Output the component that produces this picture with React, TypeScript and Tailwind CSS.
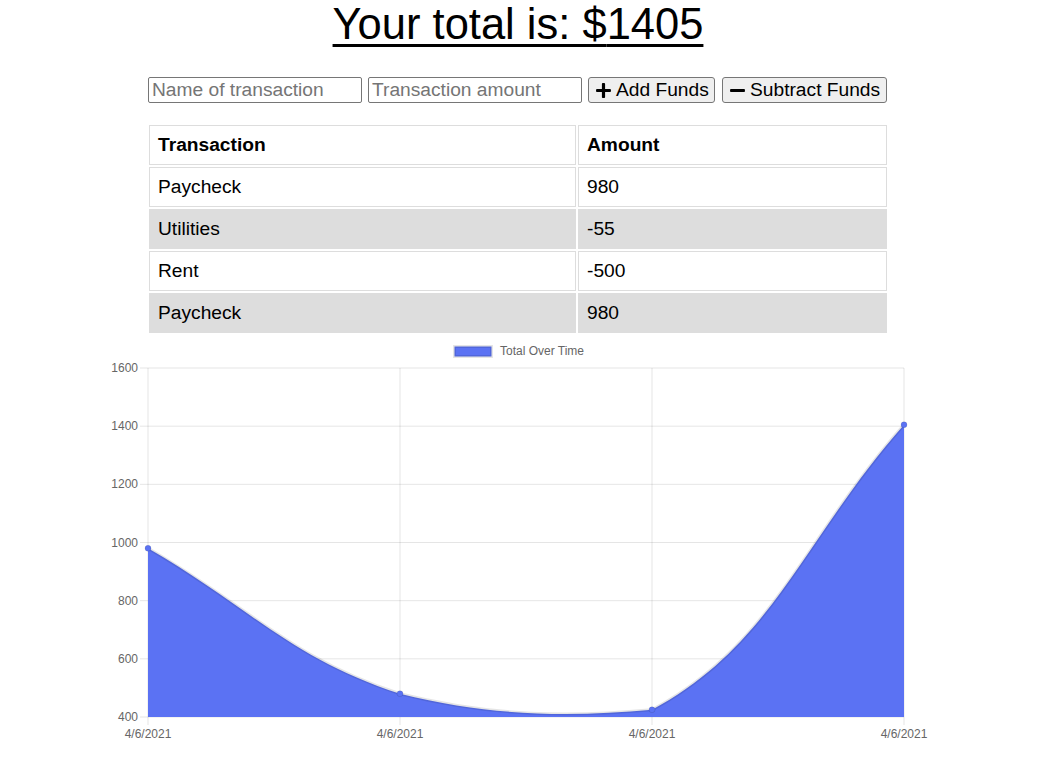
import { FaPlus, FaMinus } from "react-icons/fa";

const rows = [
  { name: "Paycheck", value: 980 },
  { name: "Utilities", value: -55 },
  { name: "Rent", value: -500 },
  { name: "Paycheck", value: 980 },
];

// chart area in page coordinates
const LEFT = 148;
const RIGHT = 904;
const TOP = 367;
const BOTTOM = 716;
const MIN = 400;
const MAX = 1600;
const BLUE = "#5b72f3";

const yOf = (v: number) => BOTTOM - ((v - MIN) * (BOTTOM - TOP)) / (MAX - MIN);

function buildPath(values: number[]) {
  const step = (RIGHT - LEFT) / (values.length - 1);
  const pts = values.map((v, i) => ({ x: LEFT + i * step, y: yOf(v) }));
  const clampX = (x: number) => Math.min(RIGHT, Math.max(LEFT, x));
  const clampY = (y: number) => Math.min(BOTTOM, Math.max(TOP, y));
  const ctrl = pts.map((cur, i) => {
    const prev = pts[i - 1] || cur;
    const next = pts[i + 1] || cur;
    const d01 = Math.hypot(cur.x - prev.x, cur.y - prev.y);
    const d12 = Math.hypot(next.x - cur.x, next.y - cur.y);
    const s01 = d01 / (d01 + d12) || 0;
    const s12 = d12 / (d01 + d12) || 0;
    const fa = 0.4 * s01;
    const fb = 0.4 * s12;
    return {
      inX: clampX(cur.x - fa * (next.x - prev.x)),
      inY: clampY(cur.y - fa * (next.y - prev.y)),
      outX: clampX(cur.x + fb * (next.x - prev.x)),
      outY: clampY(cur.y + fb * (next.y - prev.y)),
    };
  });
  let d = `M${pts[0].x},${pts[0].y}`;
  for (let i = 1; i < pts.length; i++) {
    d += ` C${ctrl[i - 1].outX},${ctrl[i - 1].outY} ${ctrl[i].inX},${ctrl[i].inY} ${pts[i].x},${pts[i].y}`;
  }
  return { d, pts };
}

function Chart() {
  // running total, oldest first
  const totals: number[] = [];
  [...rows].reverse().reduce((sum, r) => {
    totals.push(sum + r.value);
    return sum + r.value;
  }, 0);
  const { d, pts } = buildPath(totals);
  const ticks = [1600, 1400, 1200, 1000, 800, 600, 400];

  return (
    <svg width={840} height={410} viewBox="100 338 840 410" className="block ml-[100px] mt-[4px]">
      <rect x={454.5} y={345.5} width={37} height={10} fill={BLUE} stroke="rgba(0,0,0,0.1)" strokeWidth={3} />
      <text x={500} y={354} fontSize={12} fill="#666" fontFamily="'Liberation Sans', Arial, sans-serif">
        Total Over Time
      </text>

      {ticks.map((t) => (
        <g key={t}>
          <line x1={140} x2={RIGHT} y1={yOf(t)} y2={yOf(t)} stroke="rgba(0,0,0,0.1)" strokeWidth={1} />
          <text
            x={138}
            y={yOf(t) + 4}
            fontSize={12}
            textAnchor="end"
            fill="#666"
            fontFamily="'Liberation Sans', Arial, sans-serif"
          >
            {t}
          </text>
        </g>
      ))}
      {pts.map((p, i) => (
        <g key={i}>
          <line x1={p.x} x2={p.x} y1={TOP} y2={724} stroke="rgba(0,0,0,0.1)" strokeWidth={1} />
          <text
            x={p.x}
            y={737}
            fontSize={12}
            textAnchor="middle"
            fill="#666"
            fontFamily="'Liberation Sans', Arial, sans-serif"
          >
            4/6/2021
          </text>
        </g>
      ))}

      <path d={`${d} L${RIGHT},${BOTTOM} L${LEFT},${BOTTOM} Z`} fill={BLUE} />
      <path d={d} fill="none" stroke="rgba(0,0,0,0.1)" strokeWidth={3} />
      {pts.map((p, i) => (
        <circle key={i} cx={p.x} cy={p.y} r={3} fill={BLUE} stroke="rgba(0,0,0,0.1)" strokeWidth={1} />
      ))}
    </svg>
  );
}

export default function App() {
  const total = rows.reduce((s, r) => s + r.value, 0);

  return (
    <div className="bg-white min-h-[774px] text-black font-['Liberation_Sans',Arial,sans-serif]">
      <div className="w-[740px] ml-[148px]">
        <h1 className="text-[43.5px] leading-[49px] text-center underline decoration-[3px] underline-offset-[5px]">
          Your total is: ${total}
        </h1>

        <div className="flex mt-[28px] h-[26px] text-[19.2px]">
          <input
            type="text"
            placeholder="Name of transaction"
            className="w-[214px] h-[26px] border border-[#767676] rounded-[2px] px-[3px] placeholder:text-[#757575] outline-none"
          />
          <input
            type="number"
            placeholder="Transaction amount"
            className="w-[214px] h-[26px] ml-[6px] border border-[#767676] rounded-[2px] px-[3px] placeholder:text-[#757575] outline-none"
          />
          <button className="w-[127px] h-[26px] ml-[6px] flex items-center pl-[6px] bg-[#efefef] border border-[#767676] rounded-[3px] leading-none whitespace-nowrap">
            <FaPlus size={17} className="shrink-0" />
            <span className="ml-[4px]">Add Funds</span>
          </button>
          <button className="w-[165px] h-[26px] ml-[7px] flex items-center pl-[6px] bg-[#efefef] border border-[#767676] rounded-[3px] leading-none whitespace-nowrap">
            <FaMinus size={17} className="shrink-0" />
            <span className="ml-[4px]">Subtract Funds</span>
          </button>
        </div>
      </div>

      <table className="ml-[147px] mt-[20px] border-separate border-spacing-[2px] table-fixed w-[742px] text-[19.2px]">
        <thead>
          <tr>
            <th className="w-[427px] h-[40px] border border-[#dddddd] text-left font-bold pl-[8px]">Transaction</th>
            <th className="h-[40px] border border-[#dddddd] text-left font-bold pl-[8px]">Amount</th>
          </tr>
        </thead>
        <tbody>
          {rows.map((r, i) => (
            <tr key={i} className={i % 2 === 1 ? "bg-[#dddddd]" : ""}>
              <td className="h-[40px] border border-[#dddddd] pl-[8px]">{r.name}</td>
              <td className="h-[40px] border border-[#dddddd] pl-[8px]">{r.value}</td>
            </tr>
          ))}
        </tbody>
      </table>

      <Chart />
    </div>
  );
}
